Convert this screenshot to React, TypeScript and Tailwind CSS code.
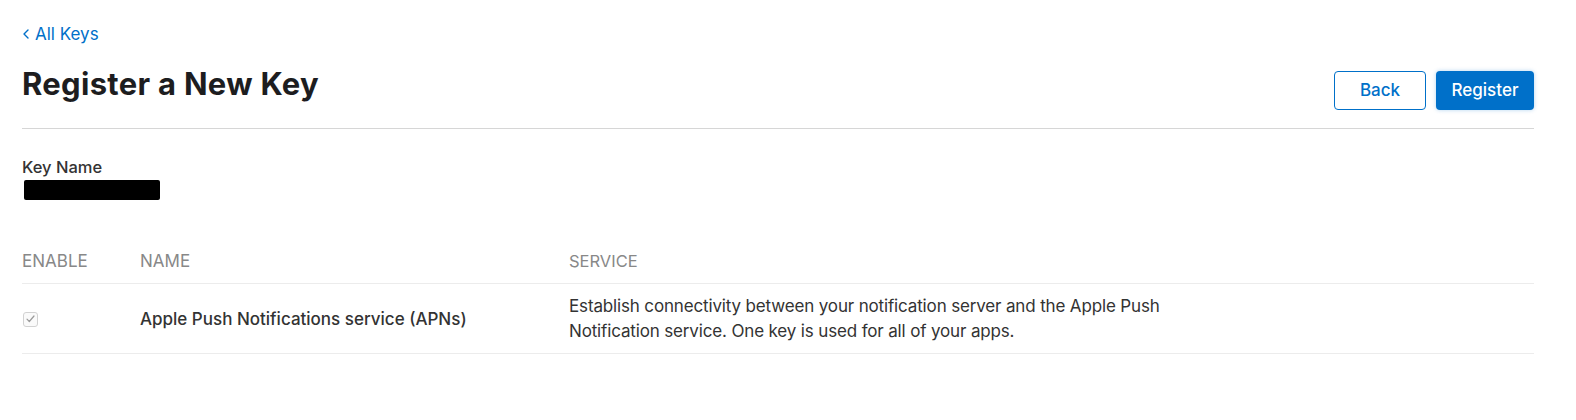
export default function App() {
  return (
    <div className="min-h-[420px] bg-white pl-[22px] pr-[42px] pt-[23px] text-[#333]" style={{ fontFamily: 'Inter, "Liberation Sans", sans-serif' }}>
      <a href="#" className="flex items-center gap-[6px] pl-[1px] text-[17px] leading-[22px] text-[#0070c9]">
        <svg width="6" height="10" viewBox="0 0 6 10" fill="none">
          <path d="M5 1L1 5l4 4" stroke="#0070c9" strokeWidth="1.4" strokeLinecap="round" strokeLinejoin="round" />
        </svg>
        All Keys
      </a>

      <div className="mt-[20px] flex items-start justify-between border-b border-[#d6d6d6] pb-[18px]">
        <h1 className="text-[31px] font-bold leading-[38px] tracking-[0.3px] text-[#1d1d1f]">Register a New Key</h1>
        <div className="mt-[6px] flex gap-[10px]">
          <button className="h-[39px] w-[92px] rounded-[4px] border border-[#0070c9] bg-white text-[17px] font-medium text-[#0070c9]">Back</button>
          <button className="h-[39px] w-[98px] rounded-[4px] bg-[#0070c9] text-[17px] font-medium text-white shadow-[0_0_4px_rgba(0,112,201,0.3)]">Register</button>
        </div>
      </div>

      <div className="mt-[28px]">
        <div className="text-[16.5px] font-medium leading-[20px] text-[#333]">Key Name</div>
        <div className="mt-[3px] ml-[2px] h-[20px] w-[136px] rounded-[2px] bg-black"></div>
      </div>

      <table className="mt-[50px] w-full border-collapse text-left">
        <thead>
          <tr className="border-b border-[#ececec]">
            <th className="w-[118px] pb-[11px] text-[17px] font-normal uppercase leading-[22px] text-[#888]">Enable</th>
            <th className="w-[429px] pb-[11px] text-[17px] font-normal uppercase leading-[22px] text-[#888]">Name</th>
            <th className="pb-[11px] text-[16.5px] font-normal uppercase leading-[22px] text-[#888]">Service</th>
          </tr>
        </thead>
        <tbody>
          <tr className="border-b border-[#ececec]">
            <td className="pt-[10px] pb-[9px] align-middle">
              <span className="ml-[1px] flex h-[15px] w-[15px] items-center justify-center rounded-[3px] border border-[#d2d2d2] bg-[#fafafa]">
                <svg width="9" height="8" viewBox="0 0 9 8" fill="none">
                  <path d="M1 4.2l2.3 2.3L8 1" stroke="#9a9a9a" strokeWidth="1.2" strokeLinecap="round" strokeLinejoin="round" />
                </svg>
              </span>
            </td>
            <td className="pt-[10px] pb-[9px] align-middle text-[17px] font-medium leading-[25px] text-[#333]">Apple Push Notifications service (APNs)</td>
            <td className="pt-[10px] pb-[9px] align-middle text-[17px] leading-[25px] tracking-[-0.15px] text-[#333]">
              <div className="w-[620px]">Establish connectivity between your notification server and the Apple Push Notification service. One key is used for all of your apps.</div>
            </td>
          </tr>
        </tbody>
      </table>
    </div>
  );
}
